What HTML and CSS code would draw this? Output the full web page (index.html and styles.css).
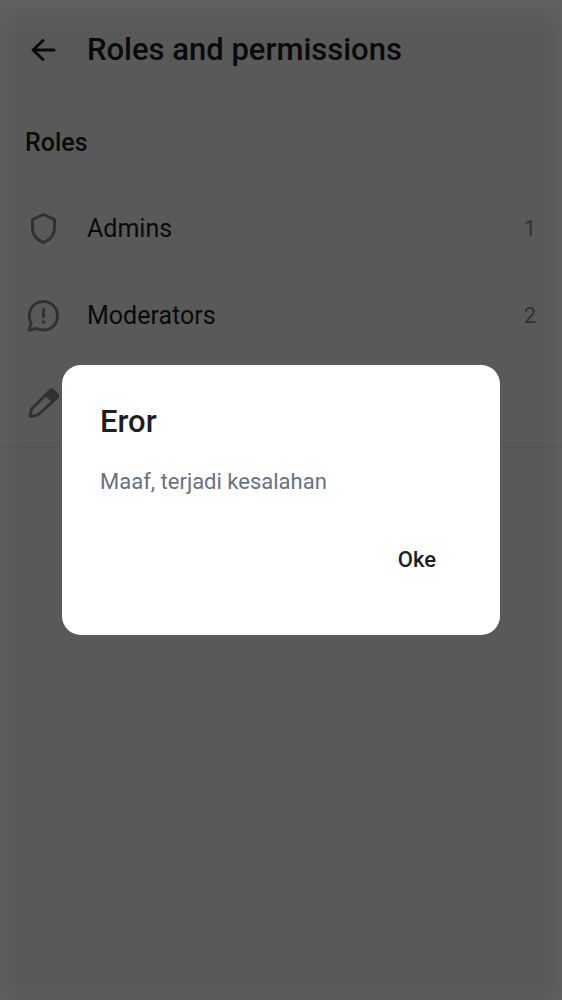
FILE: index.html
```html
<!DOCTYPE html>
<html lang="id">
<head>
<meta charset="utf-8">
<meta name="viewport" content="width=device-width, initial-scale=1">
<title>Roles and permissions</title>
<link rel="stylesheet" href="styles.css">
</head>
<body>
<main class="page">
  <header class="topbar">
    <button class="back" type="button" aria-label="Back">
      <svg class="icon" viewBox="0 0 36 36" aria-hidden="true"><path class="line" d="M29 18H8M18 8.500L8 18L18 27.500"/></svg>
    </button>
    <h1 class="title">Roles and permissions</h1>
  </header>
  <h2 class="section">Roles</h2>
  <ul class="roles">
    <li class="role">
      <svg class="icon" viewBox="0 0 36 36" aria-hidden="true"><path class="line" d="M18.500 3.500L29.500 8.500V17.500C29.500 24.500 24.500 29 18.500 31.500C12.500 29 7.500 24.500 7.500 17.500V8.500Z"/></svg>
      <span class="name">Admins</span>
      <span class="count">1</span>
    </li>
    <li class="role">
      <svg class="icon" viewBox="0 0 36 36" aria-hidden="true"><path class="line" d="M4 32L6 25C1 14.500 7.500 3.500 18.500 3.500C26.500 3.500 32.500 10 32.500 18C32.500 26 26.500 32 18.500 32C16 32 13.500 31.500 11.500 30.500Z"/><path class="line" d="M18.500 11.500V18.500"/><circle class="dot" cx="18.500" cy="24" r="1.800"/></svg>
      <span class="name">Moderators</span>
      <span class="count">2</span>
    </li>
    <li class="role">
      <svg class="icon" viewBox="0 0 36 36" aria-hidden="true"><path class="line" d="M5 31.500L6.500 24L25 5.500Q26.500 4 28 5.500L32 9.500Q33.500 11 32 12.500L13 30Z"/><path class="dot" d="M20.500 9.500L25.500 4Q27 3 28.500 4.500L33.500 9.500Q34.500 11 33.500 12.500L27.500 18L21 11.500Z"/></svg>
    </li>
  </ul>
</main>
<div class="scrim">
  <section class="dialog" role="alertdialog" aria-modal="true" aria-labelledby="dialog-title" aria-describedby="dialog-text">
    <h2 class="dialog-title" id="dialog-title">Eror</h2>
    <p class="dialog-text" id="dialog-text">Maaf, terjadi kesalahan</p>
    <div class="actions"><button class="ok" type="button">Oke</button></div>
  </section>
</div>
</body>
</html>
```
FILE: styles.css
```css
* {
  box-sizing: border-box;
}

body {
  margin: 0;
  background: #ffffff;
  color: #1c1e22;
  font-family: Roboto, "Noto Sans", sans-serif;
}

h1, h2, p, ul {
  margin: 0;
  padding: 0;
}

button {
  border: 0;
  padding: 0;
  background: none;
  color: inherit;
  font: inherit;
  cursor: pointer;
}

.topbar {
  display: flex;
  align-items: center;
  gap: 26px;
  height: 100px;
  padding: 0 26px 0 25px;
}

.back {
  display: flex;
}

.icon {
  flex: none;
  width: 36px;
  height: 36px;
}

.line {
  fill: none;
  stroke: currentColor;
  stroke-width: 3;
  stroke-linecap: round;
  stroke-linejoin: round;
}

.dot {
  fill: currentColor;
}

.title {
  font-size: 31px;
  font-weight: 500;
  line-height: 40px;
}

.section {
  padding: 26px 25px;
  font-size: 25px;
  font-weight: 500;
  line-height: 33px;
}

.roles {
  list-style: none;
  padding-bottom: 1px;
  border-bottom: 1px solid #eeeeee;
}

.role {
  display: flex;
  align-items: center;
  gap: 26px;
  height: 87px;
  padding: 0 26px 0 25px;
}

.role .icon,
.count {
  color: #858f9b;
}

.name {
  flex: 1;
  font-size: 25px;
  line-height: 32px;
}

.count {
  font-size: 22px;
  line-height: 32px;
}

.scrim {
  position: fixed;
  inset: 0;
  display: flex;
  align-items: center;
  justify-content: center;
  padding: 0 62px;
  background: rgba(0, 0, 0, 0.65);
  box-shadow: inset 0 8px 24px rgba(255, 255, 255, 0.06);
}

.dialog {
  width: 100%;
  padding: 38px;
  border-radius: 19px;
  background: #ffffff;
}

.dialog-title {
  font-size: 31px;
  font-weight: 500;
  line-height: 38px;
}

.dialog-text {
  margin-top: 25px;
  color: #67727f;
  font-size: 22px;
  line-height: 32px;
}

.actions {
  display: flex;
  justify-content: flex-end;
  padding: 31px 0 7px;
}

.ok {
  padding: 14px 26px;
  font-size: 22px;
  font-weight: 500;
  line-height: 33px;
}
```
